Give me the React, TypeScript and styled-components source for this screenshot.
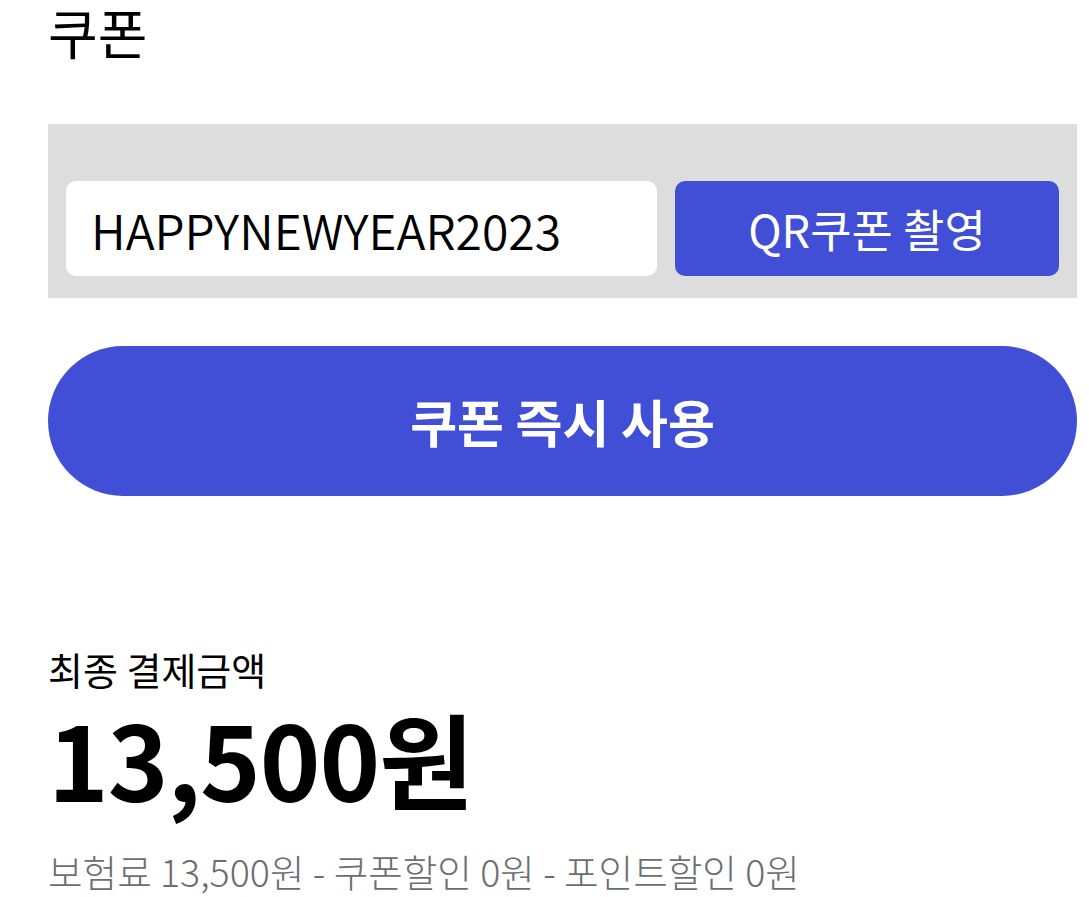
import React from "react";
import styled, { createGlobalStyle } from "styled-components";

const GlobalStyle = createGlobalStyle`
  html, body { margin: 0; padding: 0; background: #ffffff; }
  body { font-family: "Noto Sans CJK KR", "Noto Sans", sans-serif; color: #000; }
  * { box-sizing: border-box; }
`;

const Page = styled.div`
  display: flex;
  flex-direction: column;
  padding: 0 12px 0 48px;
`;

const Title = styled.h1`
  margin: 0;
  font-size: 54px;
  line-height: 64px;
  font-weight: 400;
`;

const CouponBox = styled.div`
  display: flex;
  gap: 18px;
  margin-top: 60px;
  padding: 57px 18px 22px 18px;
  background: #dddddd;
`;

const CodeInput = styled.input`
  flex: 1;
  min-width: 0;
  height: 95px;
  border: none;
  border-radius: 10px;
  background: #ffffff;
  padding: 0 0 0 25px;
  font-family: "Noto Sans CJK KR", "Noto Sans", sans-serif;
  font-size: 48px;
  font-weight: 350;
  color: #000;
  outline: none;
`;

const QrButton = styled.button`
  width: 384px;
  height: 95px;
  border: none;
  border-radius: 10px;
  background: #414fd6;
  color: #ffffff;
  font-family: "Noto Sans CJK KR", "Noto Sans", sans-serif;
  font-size: 45px;
  font-weight: 400;
  padding: 0;
`;

const UseButton = styled.button`
  margin-top: 48px;
  height: 150px;
  border: none;
  border-radius: 75px;
  background: #414fd6;
  color: #ffffff;
  font-family: "Noto Sans CJK KR", "Noto Sans", sans-serif;
  font-size: 51px;
  font-weight: 700;
`;

const Summary = styled.section`
  display: flex;
  flex-direction: column;
  margin-top: 145px;
`;

const Label = styled.div`
  font-size: 38px;
  line-height: 56px;
  font-weight: 400;
`;

const Amount = styled.div`
  font-size: 103px;
  line-height: 122px;
  font-weight: 700;
  letter-spacing: -1px;
`;

const Breakdown = styled.div`
  margin-top: 25px;
  font-size: 37.6px;
  line-height: 54px;
  font-weight: 300;
  color: #6b6d70;
`;

export default function App() {
  return (
    <>
      <GlobalStyle />
      <Page>
        <Title>쿠폰</Title>
        <CouponBox>
          <CodeInput defaultValue="HAPPYNEWYEAR2023" />
          <QrButton>QR쿠폰 촬영</QrButton>
        </CouponBox>
        <UseButton>쿠폰 즉시 사용</UseButton>
        <Summary>
          <Label>최종 결제금액</Label>
          <Amount>13,500원</Amount>
          <Breakdown>보험료 13,500원 - 쿠폰할인 0원 - 포인트할인 0원</Breakdown>
        </Summary>
      </Page>
    </>
  );
}
